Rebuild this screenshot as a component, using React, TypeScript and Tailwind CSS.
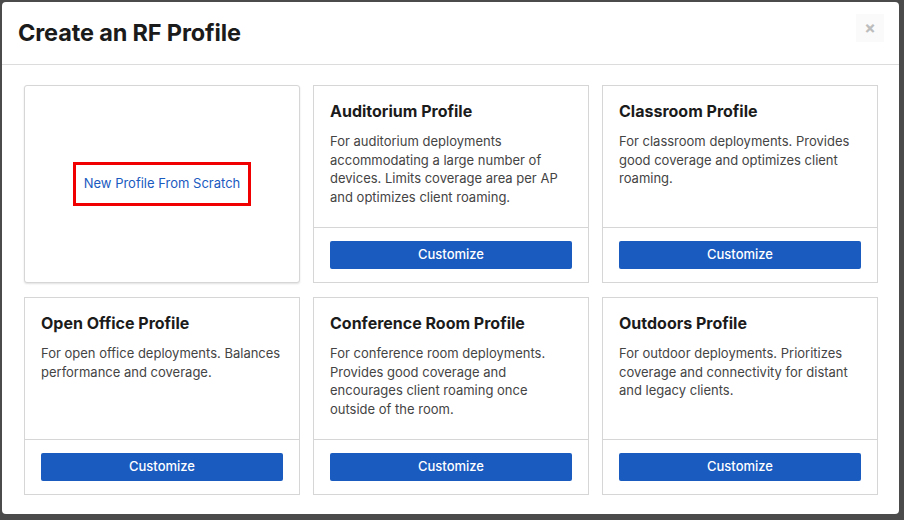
import React from "react";

const cards = [
  {
    title: "Auditorium Profile",
    desc: "For auditorium deployments accommodating a large number of devices. Limits coverage area per AP and optimizes client roaming.",
  },
  {
    title: "Classroom Profile",
    desc: "For classroom deployments. Provides good coverage and optimizes client roaming.",
  },
  {
    title: "Open Office Profile",
    desc: "For open office deployments. Balances performance and coverage.",
  },
  {
    title: "Conference Room Profile",
    desc: "For conference room deployments. Provides good coverage and encourages client roaming once outside of the room.",
  },
  {
    title: "Outdoors Profile",
    desc: "For outdoor deployments. Prioritizes coverage and connectivity for distant and legacy clients.",
  },
];

function Card({ title, desc }: { title: string; desc: string }) {
  return (
    <div className="flex h-[198px] flex-col border border-[#d6d6d6] bg-white">
      <div className="flex-1 px-4 pt-[15px]">
        <div className="text-[16px] font-bold leading-[20px] text-[#1b1b1b]">{title}</div>
        <p className="mt-[11px] text-[13px] leading-[18.5px] text-[#444]">{desc}</p>
      </div>
      <div className="border-t border-[#d6d6d6] px-4 pb-[13px] pt-[13px]">
        <button className="flex h-[28px] w-full items-center justify-center rounded-[2px] bg-[#1a5bbf] text-[13px] font-medium text-white">
          Customize
        </button>
      </div>
    </div>
  );
}

export default function App() {
  return (
    <div
      className="h-[520px] w-[904px] overflow-hidden bg-[#4b4b4b] pl-[2px] pt-[2px]"
      style={{ fontFamily: "Inter, 'Liberation Sans', sans-serif" }}
    >
      <div className="h-[512px] w-[897px] rounded-[4px] bg-white">
        <div className="flex h-[63px] items-start justify-between border-b border-[#dcdcdc] pl-4 pr-[15px]">
          <h1 className="mt-[15px] text-[23.5px] font-bold leading-[32px] tracking-[-0.15px] text-[#1b1b1b]">
            Create an RF Profile
          </h1>
          <div className="mt-[12px] flex h-[28px] w-[28px] items-center justify-center bg-[#fafafa] text-[17px] font-bold leading-none text-[#bdbdbd]">
            ×
          </div>
        </div>
        <div className="grid grid-cols-[276px_276px_276px] gap-x-[13px] gap-y-[14px] px-[22px] pt-[20px]">
          <div className="flex h-[198px] items-center justify-center rounded-[3px] border border-[#d6d6d6] bg-white shadow-[0_1px_2px_rgba(0,0,0,0.12)]">
            <div className="flex h-[44px] w-[178px] items-center justify-center border-[3px] border-[#f00000]">
              <span className="text-[13px] text-[#1a5bbf]">New Profile From Scratch</span>
            </div>
          </div>
          {cards.map((c) => (
            <Card key={c.title} title={c.title} desc={c.desc} />
          ))}
        </div>
      </div>
    </div>
  );
}
